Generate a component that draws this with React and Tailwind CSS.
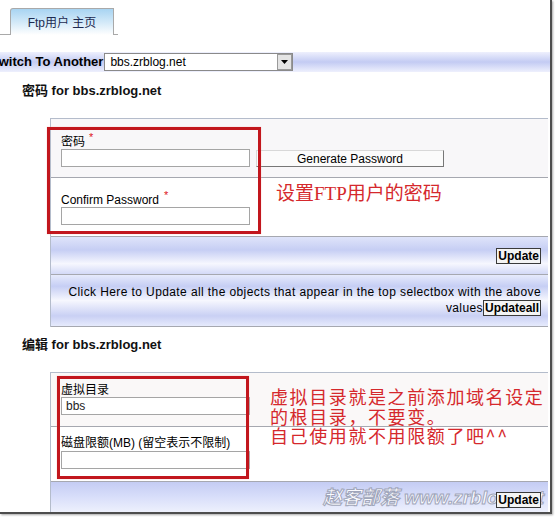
import React from 'react'

const ui = "font-['Liberation_Sans','Noto_Sans_CJK_SC',sans-serif]"

function Input({ value }) {
  return (
    <div className="w-[189px] h-[18px] bg-white border border-[#a5a5a5] text-[12px] leading-[16px] pl-[4px] text-[#222]">
      {value}
    </div>
  )
}

function Btn({ children }) {
  return (
    <button className="h-[16px] px-[1px] bg-[#f4f4f4] border border-[#3a3a3a] text-[12px] leading-[14px] font-bold text-black">
      {children}
    </button>
  )
}

export default function App() {
  return (
    <div className={`w-[555px] h-[517px] bg-white overflow-hidden ${ui}`}>
      <div className="relative w-[552px] h-[514px] border-r-[2px] border-b-[2px] border-[#4d4d4d] shadow-[1px_1px_2px_rgba(0,0,0,0.35)] overflow-hidden">
        {/* tab strip */}
        <div className="flex items-end h-[35px]">
          <div className="w-[10px] border-b border-[#a9a9a9]" />
          <div className="w-[104px] h-[27px] border border-b-0 border-[#a9a9a9] rounded-tl-[3px] bg-[linear-gradient(180deg,#a8d4f2_0%,#d6ebf9_55%,#ffffff_100%)] flex items-center justify-center text-[12px] text-[#1c2a50] pt-[1px]">
            Ftp用户 主页
          </div>
          <div className="w-[4px] border-b border-[#a9a9a9]" />
        </div>

        {/* switch bar */}
        <div className="mt-[17px] h-[20px] flex items-center bg-[linear-gradient(180deg,#eef0fd_0%,#c3cbf3_50%,#eef0fd_100%)]">
          <span className="ml-[-10px] text-[13px] font-bold text-black whitespace-nowrap">Switch To Another</span>
          <div className="ml-[1px] w-[189px] h-[18px] bg-white border border-[#8a8a8a] flex items-center justify-between">
            <span className="pl-[5px] text-[12px] text-black">bbs.zrblog.net</span>
            <div className="w-[15px] h-[16px] bg-[#e4e4e4] border border-[#9a9a9a] flex items-center justify-center">
              <svg width="7" height="4" viewBox="0 0 7 4"><path d="M0 0h7L3.5 4z" fill="#000" /></svg>
            </div>
          </div>
        </div>

        {/* password heading */}
        <div className="h-[46px] pl-[22px] pt-[12px] text-[13px] leading-[14px] font-bold text-[#111]">
          密码 for bbs.zrblog.net
        </div>

        {/* password panel */}
        <div className="ml-[50px] mr-[2px] border-l border-t border-[#b4bccb]">
          <div className="h-[59px] bg-[#f8f7f9] border-b border-[#a6a8b0] pl-[10px] pt-[16px]">
            <div className="h-[14px] text-[12px] leading-[14px] text-black">
              密码<sup className="ml-[4px] text-[#d12] text-[11px]">*</sup>
            </div>
            <div className="flex items-start">
              <Input />
              <button className="ml-[6px] mt-[1px] w-[188px] h-[17px] bg-[#fbfbfb] border border-[#d8d8d8] border-r-[#777] border-b-[#777] text-[12px] leading-[14px] text-black">
                Generate Password
              </button>
            </div>
          </div>
          <div className="h-[58px] bg-white pl-[10px] pt-[16px]">
            <div className="h-[13px] text-[12px] leading-[13px] text-black">
              Confirm Password<sup className="ml-[5px] text-[#d12] text-[11px]">*</sup>
            </div>
            <Input />
          </div>
          <div className="h-[39px] border-t border-b border-[#a6a8b0] flex items-center justify-end pr-[7px] bg-[linear-gradient(180deg,#dfe4fa_0%,#c6cef4_35%,#f6f7fe_72%,#d3d9f7_100%)]">
            <Btn>Update</Btn>
          </div>
          <div className="h-[52px] border-b border-[#a6a8b0] flex flex-col items-end justify-center pr-[7px] text-[12px] leading-[15px] tracking-[0.4px] text-black bg-[linear-gradient(180deg,#e6eafc_0%,#c6cef4_22%,#f6f7fe_50%,#c9d0f4_80%,#e6eafc_100%)]">
            <span>Click Here to Update all the objects that appear in the top selectbox with the above</span>
            <span className="flex items-center">
              values<span className="tracking-normal"><Btn>Updateall</Btn></span>
            </span>
          </div>
        </div>

        {/* edit heading */}
        <div className="h-[45px] pl-[22px] pt-[11px] text-[13px] leading-[14px] font-bold text-[#111]">
          编辑 for bbs.zrblog.net
        </div>

        {/* edit panel */}
        <div className="ml-[50px] mr-[2px] border-l border-t border-[#b4bccb]">
          <div className="h-[54px] bg-[#faf8f8] border-b border-[#a6a8b0] pl-[10px] pt-[10px]">
            <div className="h-[14px] text-[12px] leading-[14px] text-black">虚拟目录</div>
            <Input value="bbs" />
          </div>
          <div className="h-[54px] bg-white pl-[10px] pt-[9px]">
            <div className="h-[15px] text-[12px] leading-[15px] text-black">磁盘限额(MB) (留空表示不限制)</div>
            <Input />
          </div>
          <div className="relative h-[34px] border-t border-[#a6a8b0] flex items-center justify-end pr-[7px] bg-[linear-gradient(180deg,#c4ccf3_0%,#d8defa_45%,#f2f4fd_100%)]">
            <span className="absolute left-[272px] top-[6px] italic font-bold text-[19px] leading-[20px] text-white [-webkit-text-stroke:1px_#9aa0b4] whitespace-nowrap opacity-90">
              赵客部落 www.zrblog.net
            </span>
            <span className="relative z-10"><Btn>Update</Btn></span>
          </div>
        </div>

        {/* red annotations */}
        <div className="absolute left-[47px] top-[127px] w-[214px] h-[107px] border-[3px] border-[#c2161d] shadow-[0_0_1px_#f6b0b0]" />
        <div className="absolute left-[276px] top-[183px] text-[19px] leading-[22px] text-[#d5282c] font-['Liberation_Serif','Noto_Sans_CJK_SC',serif] whitespace-nowrap">
          设置FTP用户的密码
        </div>
        <div className="absolute left-[57px] top-[376px] w-[192px] h-[103px] border-[3px] border-[#c2161d] shadow-[0_0_1px_#f6b0b0]" />
        <div className="absolute left-[270px] top-[387px] text-[18px] leading-[19.5px] tracking-[1.6px] text-[#d5282c] font-['Noto_Sans_CJK_SC',sans-serif]">
          <div>虚拟目录就是之前添加域名设定</div>
          <div>的根目录，不要变。</div>
          <div>自己使用就不用限额了吧^^</div>
        </div>
      </div>
    </div>
  )
}
